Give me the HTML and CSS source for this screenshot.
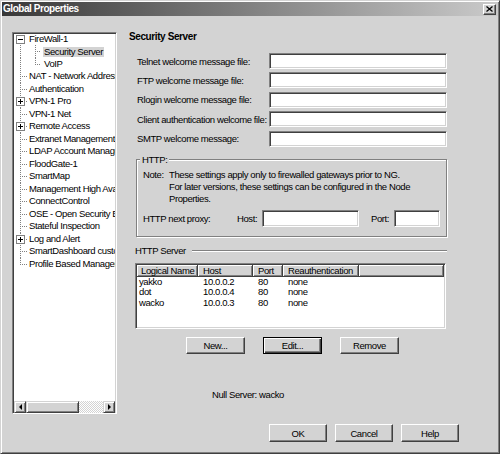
FILE: index.html
```html
<!DOCTYPE html>
<html lang="en">
<head>
  <meta charset="UTF-8">
  <title>Global Properties</title>
  <link rel="stylesheet" href="styles.css">
</head>
<body>
  <div class="dialog">
    <div class="titlebar">
      <span class="title">Global Properties</span>
      <span class="close">
        <svg width="7" height="6" viewBox="0 0 7 6"><path d="M0.5 0.5L6.5 5.5M6.5 0.5L0.5 5.5" stroke="#000" stroke-width="1.3"/></svg>
      </span>
    </div>

    <div class="main">
      <div class="tree-panel">
        <div class="tree">
          <div class="row"><i class="twig first"><b class="exp"></b></i><span>FireWall-1</span></div>
          <div class="row"><i class="twig pass"></i><i class="twig child"></i><span class="sel">Security Server</span></div>
          <div class="row"><i class="twig pass"></i><i class="twig child last"></i><span>VoIP</span></div>
          <div class="row"><i class="twig"></i><span>NAT - Network Address Translation</span></div>
          <div class="row"><i class="twig"></i><span>Authentication</span></div>
          <div class="row"><i class="twig"><b class="exp plus"></b></i><span>VPN-1 Pro</span></div>
          <div class="row"><i class="twig"></i><span>VPN-1 Net</span></div>
          <div class="row"><i class="twig"><b class="exp plus"></b></i><span>Remote Access</span></div>
          <div class="row"><i class="twig"></i><span>Extranet Management Interface</span></div>
          <div class="row"><i class="twig"></i><span>LDAP Account Management</span></div>
          <div class="row"><i class="twig"></i><span>FloodGate-1</span></div>
          <div class="row"><i class="twig"></i><span>SmartMap</span></div>
          <div class="row"><i class="twig"></i><span>Management High Availability</span></div>
          <div class="row"><i class="twig"></i><span>ConnectControl</span></div>
          <div class="row"><i class="twig"></i><span>OSE - Open Security Extension</span></div>
          <div class="row"><i class="twig"></i><span>Stateful Inspection</span></div>
          <div class="row"><i class="twig"><b class="exp plus"></b></i><span>Log and Alert</span></div>
          <div class="row"><i class="twig"></i><span>SmartDashboard customization</span></div>
          <div class="row"><i class="twig last"></i><span>Profile Based Management</span></div>
        </div>
        <div class="hscroll">
          <span class="sb-btn"><i class="arrow-left"></i></span>
          <span class="sb-thumb"></span>
          <span class="sb-track"></span>
          <span class="sb-btn"><i class="arrow-right"></i></span>
        </div>
      </div>

      <div class="page">
        <div class="page-title">Security Server</div>

        <div class="form">
          <label>Telnet welcome message file:</label><input type="text">
          <label>FTP welcome message file:</label><input type="text">
          <label>Rlogin welcome message file:</label><input type="text">
          <label>Client authentication welcome file:</label><input type="text">
          <label>SMTP welcome message:</label><input type="text">
        </div>

        <fieldset class="group">
          <legend>HTTP:</legend>
          <div class="note">
            <span>Note:</span>
            <span>These settings apply only to firewalled gateways prior to NG.<br>For later versions, these settings can be configured in the Node<br>Properties.</span>
          </div>
          <div class="proxy">
            <span class="proxy-label">HTTP next proxy:</span>
            <span class="host-label">Host:</span><input type="text" class="host">
            <span class="port-label">Port:</span><input type="text" class="port">
          </div>
        </fieldset>

        <div class="sep"><span>HTTP Server</span><i></i></div>

        <div class="list">
          <div class="list-head">
            <span class="c1">Logical Name</span>
            <span class="c2">Host</span>
            <span class="c3">Port</span>
            <span class="c4">Reauthentication</span>
            <span class="fill"></span>
          </div>
          <div class="list-row"><span class="c1">yakko</span><span class="c2">10.0.0.2</span><span class="c3">80</span><span class="c4">none</span></div>
          <div class="list-row"><span class="c1">dot</span><span class="c2">10.0.0.4</span><span class="c3">80</span><span class="c4">none</span></div>
          <div class="list-row"><span class="c1">wacko</span><span class="c2">10.0.0.3</span><span class="c3">80</span><span class="c4">none</span></div>
        </div>

        <div class="list-buttons">
          <button class="btn">New...</button>
          <button class="btn default">Edit...</button>
          <button class="btn">Remove</button>
        </div>

        <div class="null-server">Null Server: wacko</div>
      </div>
    </div>

    <div class="footer">
      <button class="btn wide">OK</button>
      <button class="btn wide">Cancel</button>
      <button class="btn wide">Help</button>
    </div>
  </div>
</body>
</html>
```

FILE: styles.css
```css
body {
  margin: 0;
  background: #d3d3d3;
  font-family: "Liberation Sans", Arial, sans-serif;
  font-size: 9.5px;
  letter-spacing: -0.4px;
  color: #000;
}
.dialog {
  width: 500px;
  height: 454px;
  box-sizing: border-box;
  border: 1px solid;
  border-color: #d3d3d3 #404040 #404040 #d3d3d3;
  box-shadow: inset 1px 1px #fff, inset -1px -1px #808080;
  padding: 1px;
  background: #d3d3d3;
}
.titlebar {
  height: 14px;
  display: flex;
  align-items: center;
  background: linear-gradient(to right, #383838, #cacaca);
}
.title {
  flex: 1;
  padding-left: 1px;
  font-weight: bold;
  font-size: 10px;
  letter-spacing: -0.45px;
  line-height: 14px;
  color: #fff;
}
.close {
  width: 13px;
  height: 11px;
  margin-right: 2px;
  box-sizing: border-box;
  display: flex;
  align-items: center;
  justify-content: center;
  background: #d3d3d3;
  border: 1px solid;
  border-color: #fff #404040 #404040 #fff;
  box-shadow: inset -1px -1px #808080;
}

/* layout */
.main {
  display: flex;
  padding: 14px 0 0 10px;
  box-sizing: border-box;
  height: 398px;
}
.tree-panel {
  margin-top: 2px;
  width: 105px;
  height: 382px;
  box-sizing: border-box;
  display: flex;
  flex-direction: column;
  background: #fff;
  border: 1px solid;
  border-color: #808080 #fff #fff #808080;
  box-shadow: inset 1px 1px #404040, inset -1px -1px #d3d3d3;
  padding: 1px;
}
.tree {
  flex: 1;
  overflow: hidden;
  margin-top: -1.5px;
}
.row {
  display: flex;
  height: 12.5px;
  line-height: 12.5px;
  white-space: nowrap;
}
.row span {
  padding: 0 1px;
}
.row .sel {
  align-self: flex-start;
  margin-top: 1.5px;
  line-height: 10px;
  height: 10px;
  background: #d3d3d3;
}
.twig {
  display: block;
  flex: none;
  width: 14px;
  height: 12.5px;
  background:
    repeating-linear-gradient(to right, #808080 0 1px, transparent 1px 2px) 6px 6px / 7px 1px no-repeat,
    repeating-linear-gradient(to bottom, #808080 0 1px, transparent 1px 2px) 6px 0 / 1px 100% no-repeat;
}
.twig.first {
  background:
    repeating-linear-gradient(to bottom, #808080 0 1px, transparent 1px 2px) 6px 6px / 1px 7px no-repeat;
}
.twig.last {
  background:
    repeating-linear-gradient(to right, #808080 0 1px, transparent 1px 2px) 6px 6px / 7px 1px no-repeat,
    repeating-linear-gradient(to bottom, #808080 0 1px, transparent 1px 2px) 6px 0 / 1px 7px no-repeat;
}
.twig.pass {
  background:
    repeating-linear-gradient(to bottom, #808080 0 1px, transparent 1px 2px) 6px 0 / 1px 100% no-repeat;
}
.twig.child {
  width: 15px;
  background:
    repeating-linear-gradient(to right, #808080 0 1px, transparent 1px 2px) 7px 6px / 6px 1px no-repeat,
    repeating-linear-gradient(to bottom, #808080 0 1px, transparent 1px 2px) 7px 0 / 1px 100% no-repeat;
}
.twig.child.last {
  background:
    repeating-linear-gradient(to right, #808080 0 1px, transparent 1px 2px) 7px 6px / 6px 1px no-repeat,
    repeating-linear-gradient(to bottom, #808080 0 1px, transparent 1px 2px) 7px 0 / 1px 7px no-repeat;
}
.exp {
  display: block;
  width: 9px;
  height: 9px;
  margin: 2px 0 0 2px;
  box-sizing: border-box;
  border: 1px solid #808080;
  background: linear-gradient(#000, #000) center / 5px 1px no-repeat, #fff;
}
.exp.plus {
  background:
    linear-gradient(#000, #000) center / 5px 1px no-repeat,
    linear-gradient(#000, #000) center / 1px 5px no-repeat,
    #fff;
}

.hscroll {
  display: flex;
  height: 12px;
  flex: none;
  margin-bottom: -1px;
}
.sb-btn, .sb-thumb {
  box-sizing: border-box;
  height: 12px;
  background: #d3d3d3;
  border: 1px solid;
  border-color: #d3d3d3 #404040 #404040 #d3d3d3;
  box-shadow: inset 1px 1px #fff, inset -1px -1px #808080;
}
.sb-btn {
  width: 12px;
  display: flex;
  align-items: center;
  justify-content: center;
}
.sb-thumb {
  width: 53px;
}
.sb-track {
  flex: 1;
  background: repeating-conic-gradient(#fff 0 25%, #d3d3d3 0 50%) 0 0 / 2px 2px;
}
.arrow-left, .arrow-right {
  width: 0;
  height: 0;
  border-top: 3px solid transparent;
  border-bottom: 3px solid transparent;
}
.arrow-left {
  border-right: 3px solid #000;
}
.arrow-right {
  border-left: 3px solid #000;
}

/* right page */
.page {
  margin-left: 12px;
  width: 369px;
}
.page-title {
  font-weight: bold;
  font-size: 10px;
  letter-spacing: -0.4px;
  line-height: 13px;
  height: 13px;
}
.form {
  display: grid;
  grid-template-columns: 132px 178px;
  grid-auto-rows: 16px;
  row-gap: 3.4px;
  margin: 10px 0 0 8px;
}
.form label {
  align-self: center;
  white-space: nowrap;
}
input[type="text"] {
  box-sizing: border-box;
  height: 16px;
  margin: 0;
  padding: 0;
  background: #fff;
  border: 1px solid;
  border-color: #808080 #fff #fff #808080;
  box-shadow: inset 1px 1px #404040, inset -1px -1px #d3d3d3;
  outline: none;
}

.group {
  margin: 7px 0 0 7px;
  width: 311px;
  box-sizing: border-box;
  min-width: 0;
  padding: 3px 6px 9px 6px;
  border: 1px solid #808080;
  box-shadow: 1px 1px 0 #fff, inset 1px 1px 0 #fff;
}
.group legend {
  padding: 0 2px;
  margin-left: -3px;
  line-height: 12px;
  background: #d3d3d3;
}
.note {
  display: grid;
  grid-template-columns: 26px auto;
  line-height: 12.35px;
  white-space: nowrap;
}
.proxy {
  display: flex;
  align-items: center;
  height: 17px;
  margin-top: 4px;
}
.proxy-label {
  width: 94px;
}
.host-label {
  width: 25px;
}
.proxy input.host {
  width: 97px;
  height: 17px;
}
.port-label {
  margin-left: 12px;
  width: 23px;
}
.proxy input.port {
  width: 46px;
  height: 17px;
}

.sep {
  display: flex;
  align-items: center;
  width: 312px;
  height: 12px;
  margin: 8px 0 0 6px;
}
.sep span {
  width: 57px;
  white-space: nowrap;
}
.sep i {
  flex: 1;
  height: 0;
  border-top: 1px solid #808080;
  border-bottom: 1px solid #fff;
}

.list {
  margin: 6px 0 0 6px;
  width: 311px;
  height: 66px;
  box-sizing: border-box;
  background: #fff;
  border: 1px solid;
  border-color: #808080 #fff #fff #808080;
  box-shadow: inset 1px 1px #404040, inset -1px -1px #d3d3d3;
  padding: 1px;
}
.list-head {
  display: flex;
  height: 12px;
}
.list-head span {
  box-sizing: border-box;
  height: 12px;
  line-height: 11px;
  padding-left: 5px;
  background: #d3d3d3;
  border-right: 1px solid #404040;
  border-bottom: 1px solid #404040;
  box-shadow: inset 1px 1px #fff, inset -1px -1px #808080;
  white-space: nowrap;
}
.list-head .c1 {
  padding-left: 4px;
}
.list-head .fill {
  flex: 1;
}
.list-row {
  display: flex;
  height: 10.7px;
  line-height: 10.7px;
}
.list-row span {
  box-sizing: border-box;
  padding-left: 5px;
  white-space: nowrap;
}
.list-row .c1 {
  padding-left: 2px;
}
.c1 { width: 61px; }
.c2 { width: 55px; }
.c3 { width: 30px; }
.c4 { width: 76px; }

.btn {
  box-sizing: border-box;
  width: 59px;
  height: 17px;
  margin: 0;
  padding: 0;
  font: inherit;
  letter-spacing: inherit;
  color: #000;
  background: #d3d3d3;
  border: 1px solid;
  border-color: #fff #404040 #404040 #fff;
  box-shadow: inset -1px -1px #808080;
}
.btn.default {
  border-color: #000;
  box-shadow: inset 1px 1px #fff, inset -1px -1px #404040, inset -2px -2px #808080;
}
.btn.wide {
  width: 58px;
  height: 18px;
}
.list-buttons {
  display: flex;
  gap: 18px;
  margin: 8px 0 0 57px;
}
.null-server {
  margin: 35px 0 0 83px;
  line-height: 12px;
}

.footer {
  display: flex;
  justify-content: flex-end;
  gap: 8px;
  margin-top: 10px;
  padding-right: 39px;
}
```
